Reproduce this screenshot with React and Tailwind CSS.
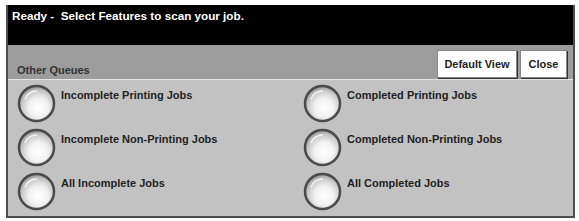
const rows = [
  ['Incomplete Printing Jobs', 'Completed Printing Jobs'],
  ['Incomplete Non-Printing Jobs', 'Completed Non-Printing Jobs'],
  ['All Incomplete Jobs', 'All Completed Jobs'],
]

const Radio = () => (
  <svg width="39" height="39" viewBox="0 0 39 39" className="shrink-0">
    <defs>
      <radialGradient id="rg" cx="55%" cy="62%" r="60%">
        <stop offset="0%" stopColor="#ffffff" />
        <stop offset="45%" stopColor="#f2f2f2" />
        <stop offset="80%" stopColor="#c8c8c8" />
        <stop offset="100%" stopColor="#9a9a9a" />
      </radialGradient>
    </defs>
    <circle cx="19.5" cy="19.5" r="17.5" fill="url(#rg)" stroke="#4a4a4a" strokeWidth="2.5" />
    <path d="M8 15 A12 12 0 0 1 20 7" fill="none" stroke="#ffffff" strokeWidth="1.5" opacity="0.8" />
  </svg>
)

const Option = ({ label }) => (
  <div className="flex items-start gap-[5px] h-[44px]">
    <Radio />
    <div className="mt-[5px] text-[11px] font-bold text-[#222] leading-[13px]">{label}</div>
  </div>
)

export default function App() {
  return (
    <div className="w-[579px] h-[221px] bg-white pt-[5px] pl-[6px]" style={{ fontFamily: '"Liberation Sans", Arial, sans-serif' }}>
      <div className="w-[569px] h-[213px] flex flex-col border-x-2 border-b-2 border-[#4d4d4d] bg-[#c2c2c2]">
        <div className="h-[43px] bg-black pl-[4px] pt-[4px]">
          <div className="text-[11.7px] font-bold text-white leading-[14px] whitespace-pre">Ready -  Select Features to scan your job.</div>
        </div>
        <div className="h-[37px] bg-[#9c9c9c] border-b border-[#e4e4e4] flex items-center justify-between pl-[9px] pr-[6px]">
          <div className="text-[11px] font-bold text-[#333] leading-[13px] mt-[16px]">Other Queues</div>
          <div className="flex gap-[3px] mt-[4px]">
            <button className="w-[80px] h-[28px] bg-white border border-[#888] shadow-[1px_1px_0_#333] text-[11px] font-bold text-[#222]">Default View</button>
            <button className="w-[47px] h-[28px] bg-white border border-[#888] shadow-[1px_1px_0_#333] text-[11px] font-bold text-[#222]">Close</button>
          </div>
        </div>
        <div className="flex-1 flex pt-[4px] pl-[9px]">
          <div className="w-[286px] flex flex-col">
            {rows.map((r) => <Option key={r[0]} label={r[0]} />)}
          </div>
          <div className="flex-1 flex flex-col">
            {rows.map((r) => <Option key={r[1]} label={r[1]} />)}
          </div>
        </div>
      </div>
    </div>
  )
}
